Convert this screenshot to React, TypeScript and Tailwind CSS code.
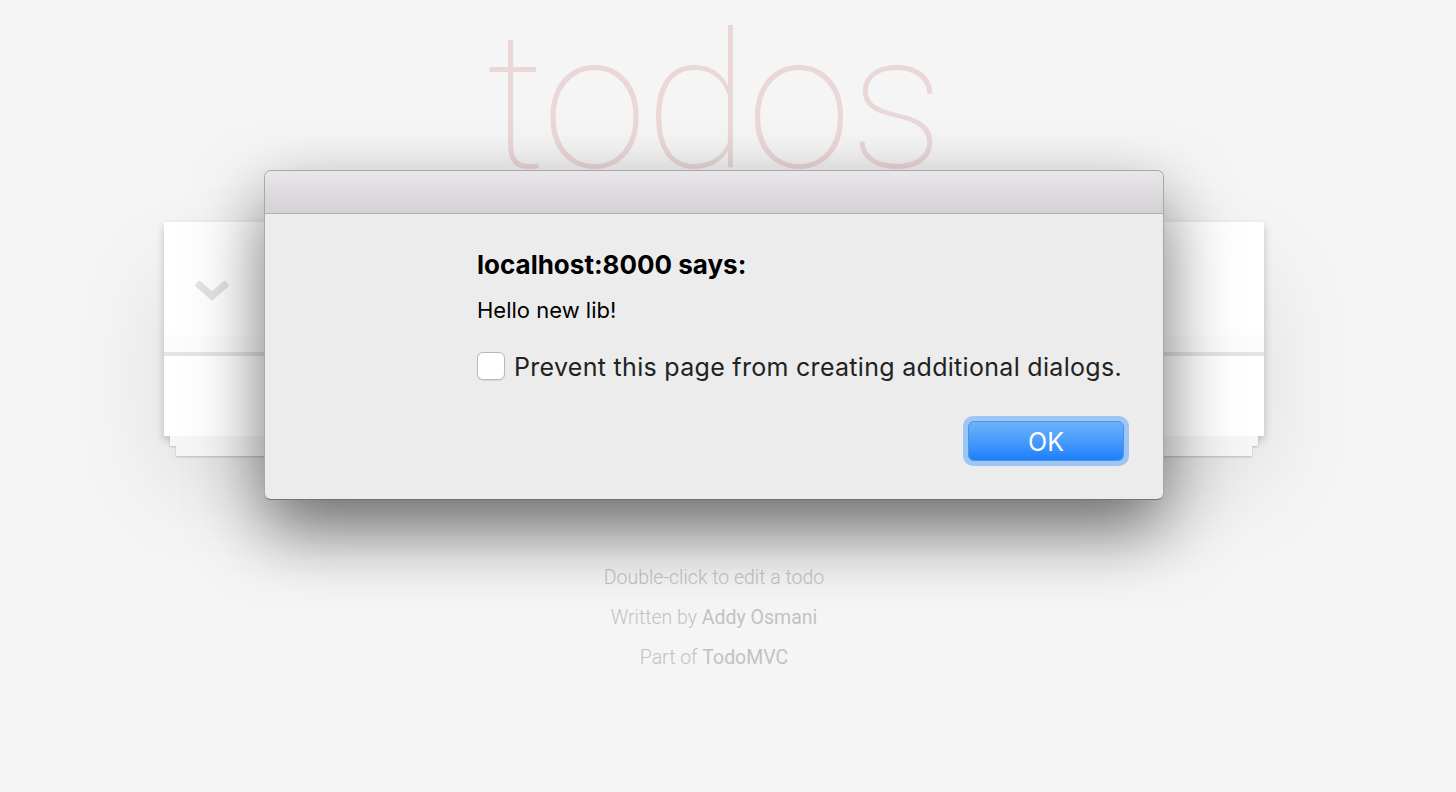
export default function App() {
  return (
    <div className="relative min-h-screen overflow-hidden bg-[#f5f5f5]">
      <TodoPage />
      <AlertDialog />
    </div>
  );
}

function TodoPage() {
  return (
    <div className="w-[1428px]">
      <div className="mx-auto w-[1100px]">
        <h1
          className="pt-[7px] text-center text-[190px] leading-[190px] font-thin tracking-[-2px] text-[rgba(175,47,47,0.15)]"
          style={{ fontFamily: "Roboto, sans-serif" }}
        >
          todos
        </h1>

        <div className="mt-[25px] bg-white shadow-[0_4px_8px_rgba(0,0,0,0.2),0_50px_100px_rgba(0,0,0,0.1)]">
          <div className="flex h-[113px] items-center pl-[30px]">
            <svg width="36" height="26" viewBox="0 0 36 26" className="mt-[26px]">
              <polyline
                points="3,4 18,17 33,4"
                fill="none"
                stroke="#e3e3e3"
                strokeWidth="7"
              />
            </svg>
          </div>
          <div className="h-[17px] bg-[#fcfcfc]" />
          <div className="h-[4px] bg-[#e4e4e4]" />
          <div className="h-[80px]" />
        </div>
        <div className="mx-[6px] h-[10px] bg-[#f6f6f6] shadow-[0_1px_2px_rgba(0,0,0,0.2)]" />
        <div className="mx-[12px] h-[10px] bg-[#f6f6f6] shadow-[0_1px_2px_rgba(0,0,0,0.2)]" />

        <footer
          className="mt-[102px] text-center text-[19.5px] leading-[40px] font-light text-[#c2c2c2]"
          style={{ fontFamily: "Roboto, sans-serif" }}
        >
          <p>Double-click to edit a todo</p>
          <p>
            Written by <a className="font-normal">Addy Osmani</a>
          </p>
          <p>
            Part of <a className="font-normal">TodoMVC</a>
          </p>
        </footer>
      </div>
    </div>
  );
}

function AlertDialog() {
  return (
    <div
      className="absolute top-[170px] left-[264px] z-10 flex h-[330px] w-[900px] flex-col overflow-hidden rounded-[7px] border border-[#a8a8a8] border-b-[#747474] bg-[#ececec] shadow-[0_30px_70px_rgba(0,0,0,0.55)]"
      style={{ fontFamily: "Inter, 'Liberation Sans', sans-serif" }}
    >
      <div className="h-[43px] shrink-0 border-b border-[#b2b0b2] bg-gradient-to-b from-[#e9e7e9] to-[#d3d1d3]" />
      <div className="flex flex-col pl-[212px] pr-[34px]">
        <div className="mt-[35px] text-[26px] leading-[32px] font-bold text-black">
          localhost:8000 says:
        </div>
        <div className="mt-[15px] text-[22px] leading-[28px] text-black">
          Hello new lib!
        </div>
        <label className="mt-[28px] flex items-start gap-[9px]">
          <span className="h-[28px] w-[28px] shrink-0 rounded-[6px] border border-[#b8b8b8] bg-white shadow-[0_1px_1px_rgba(0,0,0,0.08)]" />
          <span className="mt-[1px] text-[25px] leading-[28px] tracking-[0.3px] text-[#222]">
            Prevent this page from creating additional dialogs.
          </span>
        </label>
        <div className="mt-[35px] flex justify-end">
          <div className="rounded-[10px] bg-[#9dc6f4] p-[5px]">
            <button className="flex h-[40px] w-[156px] items-center justify-center rounded-[6px] border border-[#4c93e8] bg-gradient-to-b from-[#6db3fa] to-[#1a80fb] pt-[3px] text-[25px] text-white">
              OK
            </button>
          </div>
        </div>
      </div>
    </div>
  );
}
